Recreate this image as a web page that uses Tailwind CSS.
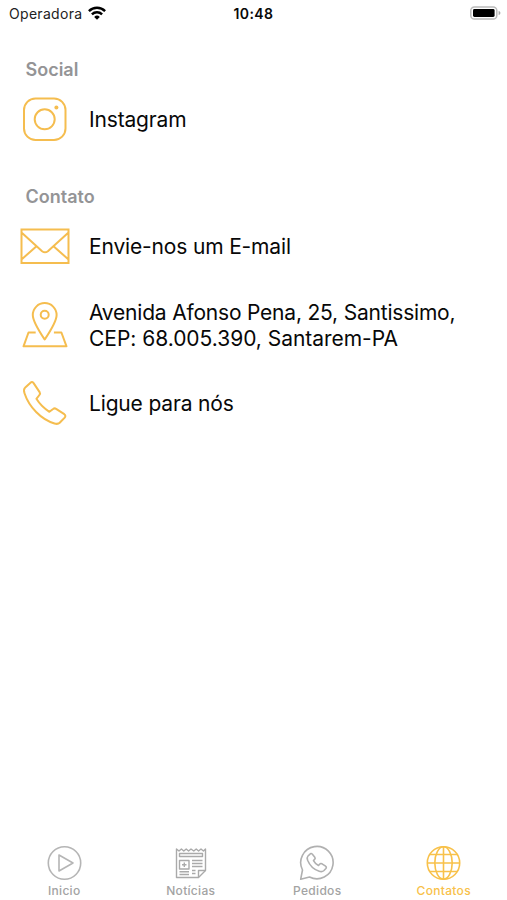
<!DOCTYPE html>
<html lang="pt-BR">

<head>
    <meta charset="UTF-8">
    <meta name="viewport" content="width=device-width, initial-scale=1.0">
    <title>Contatos</title>
    <script src="https://cdn.jsdelivr.net/npm/@tailwindcss/browser@4"></script>
</head>

<body class="flex h-screen flex-col overflow-hidden bg-white font-['Inter','Liberation_Sans',sans-serif] text-[#080808]">
    <!-- Status bar -->
    <header class="grid h-[27px] grid-cols-3 items-center">
        <div class="flex items-center gap-[6px] pl-[9px]">
            <span class="text-[14px] tracking-[0.3px] text-[#222]">Operadora</span>
            <svg class="-mt-px h-[14px] w-[18px] shrink-0" viewBox="0 0 18 14" fill="none" stroke="#000" stroke-width="2.4">
                <path d="M.9 5.1a11.6 11.6 0 0 1 16.2 0M3.9 8.3a7.3 7.3 0 0 1 10.2 0" />
                <path d="M9 13.7 6.2 10.9a4 4 0 0 1 5.6 0Z" fill="#000" stroke="none" />
            </svg>
        </div>
        <span class="text-center text-[14px] font-semibold tracking-[0.4px]">10:48</span>
        <div class="flex justify-end pr-[6px]">
            <svg class="-mt-px h-[14px] w-[31px]" viewBox="0 0 31 14">
                <rect x=".8" y=".9" width="26" height="12.2" rx="3.6" fill="#fff" stroke="#bbb" stroke-width="1.5" />
                <rect x="3" y="3" width="21.6" height="8" rx="1.4" fill="#000" />
                <path d="M28.600 5v4c1.200-.3 1.800-1.100 1.800-2s-.6-1.700-1.800-2Z" fill="#aaa" />
            </svg>
        </div>
    </header>

    <main class="flex-1 pt-[30px] text-[21px] leading-[26px] tracking-[-0.16px]">
        <section>
            <h2 class="h-[24px] pl-[25.5px] text-[18px] leading-[26px] font-semibold tracking-normal text-[#949496]">Social</h2>
            <a class="flex h-[76px] items-center gap-[19px] pl-[20px]">
                <svg class="h-[50px] w-[50px] shrink-0" viewBox="0 0 50 50" fill="none" stroke="#f5bd4f" stroke-width="2">
                    <rect x="4" y="4.500" width="41.500" height="41.500" rx="11.500" />
                    <circle cx="24.700" cy="25.300" r="10" />
                    <circle cx="36.400" cy="13.500" r="2" fill="#f5bd4f" stroke="none" />
                </svg>
                <span class="pt-[2px]">Instagram</span>
            </a>
        </section>

        <section class="pt-[27px]">
            <h2 class="h-[24px] pl-[25.5px] text-[18px] leading-[26px] font-semibold tracking-normal text-[#949496]">Contato</h2>
            <a class="flex h-[76px] items-center gap-[19px] pl-[20px]">
                <svg class="h-[50px] w-[50px] shrink-0" viewBox="0 0 50 50" fill="none" stroke="#f5bd4f" stroke-width="2">
                    <path d="M1.500 8.500h47v33.500h-47zM1.500 11.500l20.600 18.700q2.900 2.200 5.800 0L48.500 11.500M1.500 38.500 16.200 25.500M48.500 38.500 33.800 25.500" />
                </svg>
                <span class="pt-[2px]">Envie-nos um E-mail</span>
            </a>
            <a class="flex h-[82px] items-center gap-[19px] pl-[20px]">
                <svg class="h-[50px] w-[50px] shrink-0" viewBox="0 0 50 50" fill="none" stroke="#f5bd4f" stroke-width="2" stroke-linejoin="round">
                    <path d="M24.700 39.500C19 31 12.800 21.800 12.800 15a11.900 11.900 0 0 1 23.800 0c0 6.800-6.200 16-11.900 24.500Z" />
                    <circle cx="24.700" cy="14.800" r="4" />
                    <path d="M15.700 32.500H8.500L3.500 46.300h43L41.400 32.500h-7.500" />
                </svg>
                <span class="pt-[2px] tracking-[-0.2px]">Avenida Afonso Pena, 25, Santissimo,<br><span class="tracking-[-0.03px]">CEP: 68.005.390, Santarem-PA</span></span>
            </a>
            <a class="flex h-[74px] items-center gap-[19px] pl-[20px]">
                <svg class="h-[50px] w-[50px] shrink-0" viewBox="0 0 50 50" fill="none" stroke="#f5bd4f" stroke-width="2" stroke-linejoin="round">
                    <path d="M10.500 4.700 5 9.700C3.500 11 3.800 13 4.500 15.300 9 29 21 41.500 34.500 45.500c2 .6 3.800.6 5.200-.7l5-5.200c1-1.200.9-2.500-.4-3.400l-8.200-5.400c-1-.6-2-.6-3 .2l-3.700 2.800c-5.400-3.400-9.700-7.700-13-13l3-3.800c.8-1 .8-1.900.2-2.900L13.600 5.100c-.8-1.200-2.100-1.300-3.100-.4Z" />
                </svg>
                <span class="pt-[2px]">Ligue para nós</span>
            </a>
        </section>
    </main>

    <!-- Tab bar -->
    <nav class="grid h-[60px] grid-cols-4 pt-[5px] pl-px text-[12px] leading-[15px] font-medium tracking-[0.3px] text-[#a3a3a3]">
        <a class="flex flex-col items-center gap-[2px]">
            <svg class="h-[36px] w-[36px]" viewBox="0 0 36 36" fill="none" stroke="#b5b5b5" stroke-width="1.600" stroke-linejoin="round">
                <circle cx="18.500" cy="18" r="16.200" />
                <path d="M13 10v16l14-8Z" />
            </svg>
            <span>Inicio</span>
        </a>
        <a class="flex flex-col items-center gap-[2px]">
            <svg class="h-[36px] w-[36px]" viewBox="0 0 36 36" fill="none" stroke="#aaa" stroke-width="1.400" stroke-linejoin="round">
                <path d="M3.500 4v28.500h22l7-7V4l-2.100 2-2.400-2-2.400 2-2.400-2-2.400 2L18 4l-2.400 2-2.400-2-2.400 2-2.400-2L6 6Z" />
                <path d="M25.500 32.500v-7h7" />
                <path d="M6.500 8.500h23v3h-23zM6.500 15.500h9.500v8.500h-9.500zM9 19.800h4.500M11.300 17.500v4.500" />
                <path d="M19 15.500h10.500M19 18.500h10.500M19 21.500h10.500M6.500 26.700h9.500M6.500 29.500h9.500M19 25.500h3.500M19 28.500h3.500" />
            </svg>
            <span>Notícias</span>
        </a>
        <a class="flex flex-col items-center gap-[2px]">
            <svg class="h-[36px] w-[36px]" viewBox="0 0 36 36" fill="none" stroke="#b0b0b0" stroke-width="1.600" stroke-linejoin="round">
                <path d="M1.700 34.200 3.500 25A16.200 16.200 0 1 1 10.500 32Z" />
                <path d="M10.800 9.300 9 11c-1.100 1.100-.9 2.700-.4 4.300 2.200 5.400 6 9.200 11.600 11 1.800.6 3.500.4 4.800-.8l1.900-2c.7-.9.5-1.800-.3-2.300l-3.600-2.400c-.9-.5-1.800-.3-2.400.4l-1.100 1.300c-2.200-1.100-3.900-2.800-5-4.900l1.100-1.200c.7-.7.8-1.400.2-2.200l-2.600-3.100c-.7-.9-1.600-.7-2.400.2Z" />
            </svg>
            <span>Pedidos</span>
        </a>
        <a class="flex flex-col items-center gap-[2px] text-[#f8c14a]">
            <svg class="h-[36px] w-[36px]" viewBox="0 0 36 36" fill="none" stroke="currentColor" stroke-width="1.600">
                <circle cx="17.500" cy="18" r="16.200" />
                <ellipse cx="17.500" cy="18" rx="8.700" ry="16.200" />
                <path d="M17.500 1.800v32.400M1.300 18h32.400M3.800 9.500h27.400M3.800 26.500h27.400" />
            </svg>
            <span>Contatos</span>
        </a>
    </nav>
</body>

</html>
